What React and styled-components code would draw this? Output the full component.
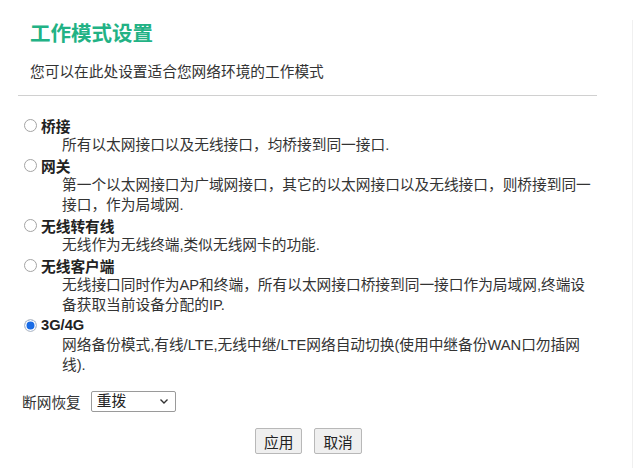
import React, { useState } from 'react';
import styled, { createGlobalStyle } from 'styled-components';

const GlobalStyle = createGlobalStyle`
  body {
    margin: 0;
    background: #fff;
    font-family: "Liberation Sans", "Noto Sans CJK SC", sans-serif;
    color: #333;
  }
`;

const Page = styled.div`
  width: 633px;
  min-height: 468px;
  box-sizing: border-box;
  border-right: 1px solid #f0f0f0;
  font-size: 14.7px;
`;

const Header = styled.div`
  padding-left: 30px;
`;

const Title = styled.h2`
  margin: 20px 0 0;
  font-size: 20.5px;
  line-height: 28px;
  font-weight: 700;
  color: #22b285;
`;

const Subtitle = styled.p`
  margin: 14px 0 0;
  line-height: 20px;
  color: #333;
`;

const Divider = styled.hr`
  margin: 13px 0 0 18px;
  width: 579px;
  border: none;
  border-top: 1px solid #d0d0d0;
  height: 0;
`;

const OptionList = styled.div`
  margin-top: 19px;
  display: flex;
  flex-direction: column;
`;

const OptionRow = styled.label`
  display: flex;
  align-items: center;
  height: 20px;
  padding-left: 24px;
  cursor: pointer;
`;

const Radio = styled.input`
  appearance: none;
  flex-shrink: 0;
  margin: 0;
  width: 13px;
  height: 13px;
  border: 1px solid #a4a4a4;
  border-radius: 50%;
  box-sizing: border-box;
  background: #fff;

  &:checked {
    border-color: #c8c8c8;
    background: #1a6ce6;
    box-shadow: inset 0 0 0 1.5px #fff;
  }
`;

const OptionName = styled.span`
  margin-left: 4px;
  font-weight: 700;
  color: #222;
`;

const Desc = styled.div`
  padding-left: 62px;
  line-height: 20px;
  color: #333;
`;

const RecoverRow = styled.div`
  display: flex;
  align-items: center;
  gap: 10px;
  margin-top: 16px;
  padding-left: 22px;
  height: 20px;
`;

const SelectWrap = styled.div`
  position: relative;
  display: flex;

  svg {
    position: absolute;
    right: 7px;
    top: 7px;
    pointer-events: none;
  }
`;

const Select = styled.select`
  appearance: none;
  width: 85px;
  height: 21px;
  padding: 0 0 0 5px;
  font: inherit;
  font-size: 14.7px;
  color: #222;
  border: 1px solid #9a9a9a;
  border-radius: 2px;
  background: #fff;
  outline: none;
`;

const ButtonRow = styled.div`
  display: flex;
  gap: 12px;
  margin-top: 17px;
  padding-left: 255px;
`;

const Button = styled.button`
  height: 26px;
  padding: 0 8px;
  font: inherit;
  font-size: 14.7px;
  color: #222;
  background: #efefef;
  border: 1px solid #b8b8b8;
  border-radius: 2px;
  cursor: pointer;
`;

const modes = [
  { id: 'bridge', name: '桥接', lines: ['所有以太网接口以及无线接口，均桥接到同一接口.'] },
  {
    id: 'gateway',
    name: '网关',
    lines: ['第一个以太网接口为广域网接口，其它的以太网接口以及无线接口，则桥接到同一', '接口，作为局域网.'],
  },
  { id: 'wisp', name: '无线转有线', lines: ['无线作为无线终端,类似无线网卡的功能.'] },
  {
    id: 'client',
    name: '无线客户端',
    lines: ['无线接口同时作为AP和终端，所有以太网接口桥接到同一接口作为局域网,终端设', '备获取当前设备分配的IP.'],
  },
  {
    id: '3g4g',
    name: '3G/4G',
    lines: ['网络备份模式,有线/LTE,无线中继/LTE网络自动切换(使用中继备份WAN口勿插网', '线).'],
  },
];

export default function App() {
  const [mode, setMode] = useState('3g4g');
  const [recover, setRecover] = useState('redial');

  return (
    <Page>
      <GlobalStyle />
      <Header>
        <Title>工作模式设置</Title>
        <Subtitle>您可以在此处设置适合您网络环境的工作模式</Subtitle>
      </Header>
      <Divider />

      <OptionList>
        {modes.map((m) => (
          <div key={m.id}>
            <OptionRow>
              <Radio
                type="radio"
                name="mode"
                checked={mode === m.id}
                onChange={() => setMode(m.id)}
              />
              <OptionName>{m.name}</OptionName>
            </OptionRow>
            <Desc>
              {m.lines.map((l, i) => (
                <div key={i}>{l}</div>
              ))}
            </Desc>
          </div>
        ))}
      </OptionList>

      <RecoverRow>
        <span>断网恢复</span>
        <SelectWrap>
          <Select value={recover} onChange={(e) => setRecover(e.target.value)}>
            <option value="redial">重拨</option>
            <option value="reboot">重启</option>
          </Select>
          <svg width="10" height="7" viewBox="0 0 10 7">
            <path d="M1.5 1.5 L5 5 L8.5 1.5" fill="none" stroke="#333" strokeWidth="1.4" />
          </svg>
        </SelectWrap>
      </RecoverRow>

      <ButtonRow>
        <Button type="button">应用</Button>
        <Button type="button">取消</Button>
      </ButtonRow>
    </Page>
  );
}
